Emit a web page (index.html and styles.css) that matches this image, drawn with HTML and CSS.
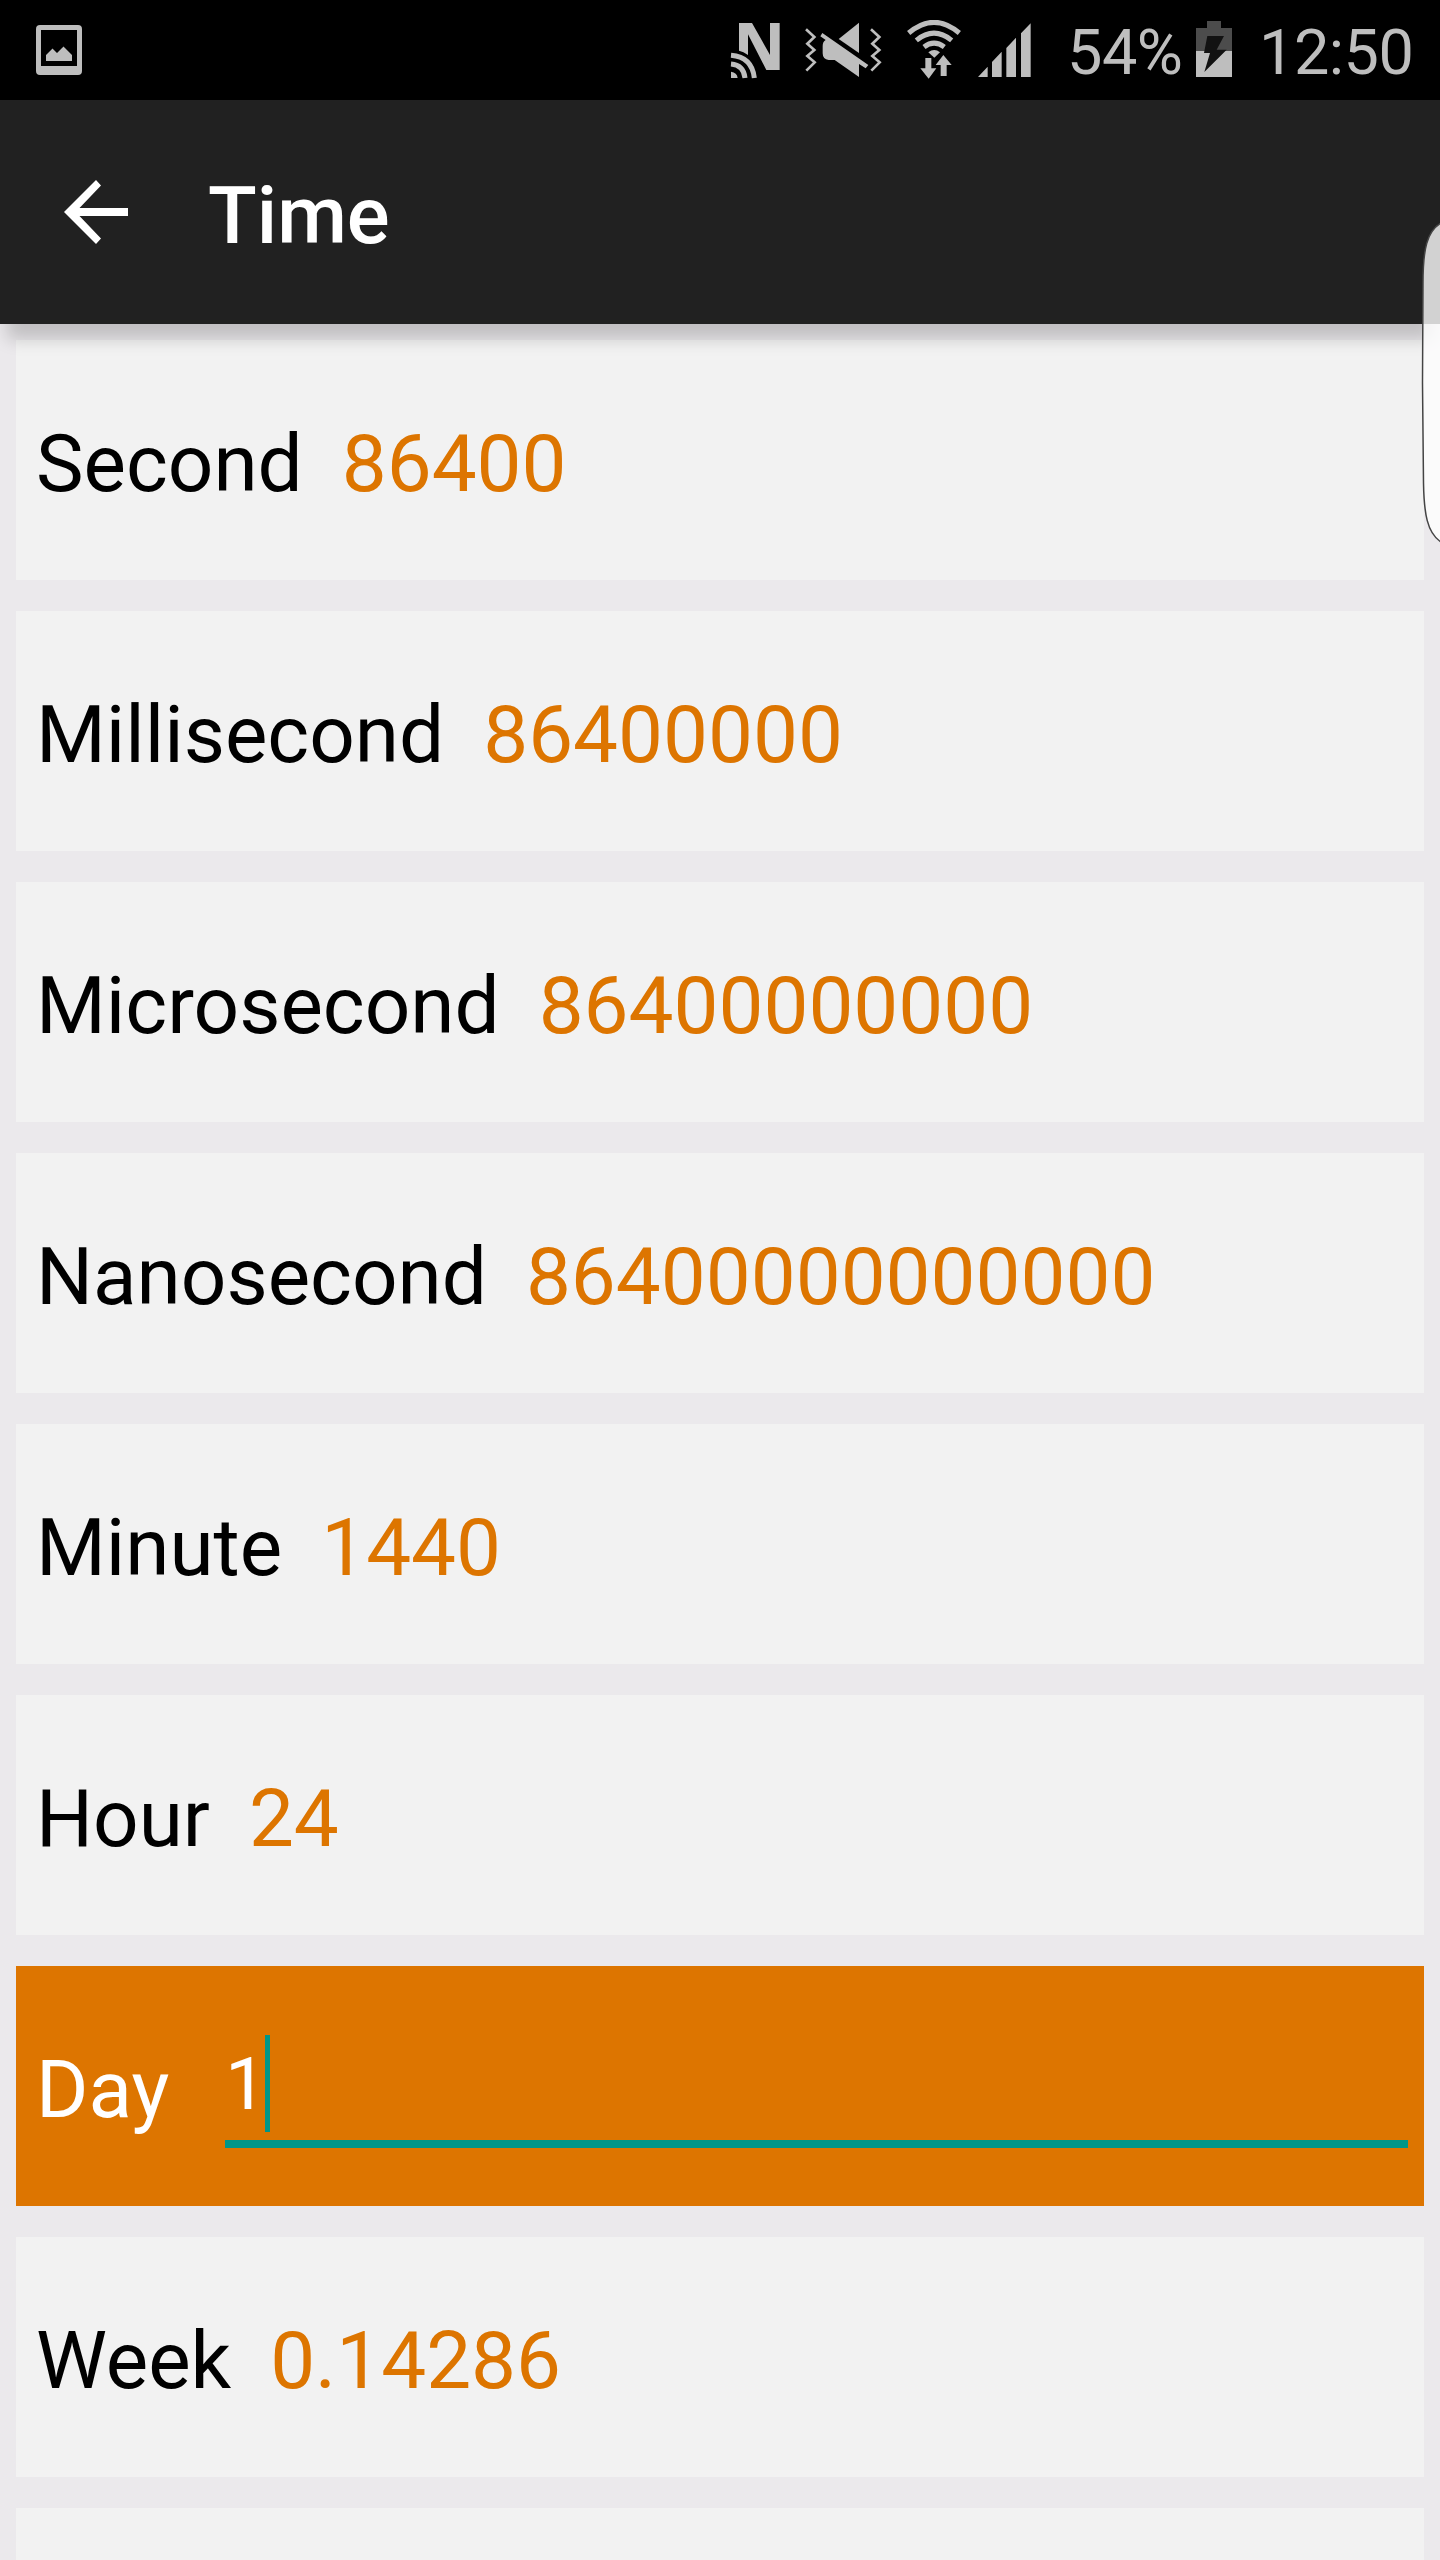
FILE: index.html
```
<!DOCTYPE html>
<html lang="en">
<head>
    <meta charset="UTF-8">
    <meta name="viewport" content="width=device-width, initial-scale=1.0">
    <title>Time</title>
    <link rel="stylesheet" href="styles.css">
</head>
<body>
    <div class="status-bar">
        <svg class="icon-image" viewBox="0 0 46 50">
            <path fill-rule="evenodd" d="M4 0h38a4 4 0 0 1 4 4v42a4 4 0 0 1-4 4H4a4 4 0 0 1-4-4V4a4 4 0 0 1 4-4zM5 5v36h36V5z"/>
            <path d="M10 36v-6l6.500-6.500 4.500 4.500 6.500-6.500 8.500 8.500v6z"/>
        </svg>
        <div class="status-icons">
            <!-- NFC -->
            <svg class="icon-nfc" viewBox="60 60 153 180">
                <path d="M87 69h39l54 96V69h29v141h-40l-55-107v62q-14-10-27-13z"/>
                <path d="M63 215q18 2 20 19H63z"/>
                <path class="line" d="M63 192q38 3 42 42M63 166q63 5 70 68"/>
            </svg>
            <!-- muted, vibrate -->
            <svg class="icon-mute" viewBox="285 60 231 180">
                <path class="zigzag" d="M288 88l25 23-21 20 21 19-21 18 22 19-25 25M483 88l25 23-21 20 21 19-21 18 22 19-25 25"/>
                <path d="M447 68v91l-61-42z"/>
                <path d="M337 99l138 96-8 10-20-13v39l-73-51h-18q-18-2-18-20v-22q0-13 9-18l-16-11z"/>
            </svg>
            <!-- wifi -->
            <svg class="icon-wifi" viewBox="588 60 168 180">
                <path class="arc" d="M596 99q76-64 152 0M619 121q53-43 106 0M642 141q30-23 61 0"/>
                <path d="M655 157q18-14 35 0l-17 16z"/>
                <path class="cut" d="M646 174h18v31h15l-23 31-25-31h15zM700 165l25 30h-15v33h-18v-33h-15z"/>
            </svg>
            <!-- signal -->
            <svg class="icon-signal" viewBox="804 60 159 180">
                <path d="M804 231l29-31v31zM846 231v-45l29-31v76zM889 231v-87l29-31v118zM933 231V100l29-30v161z"/>
            </svg>
        </div>
        <span class="battery-level">54%</span>
        <svg class="icon-battery" viewBox="468 60 108 180">
            <path class="empty" d="M501 63h42v21h33v69H468V84h33z"/>
            <path d="M468 153h108v78H468z"/>
            <path class="bolt" d="M502 108h50l-22 41h30l-67 67 17-57h-18z"/>
        </svg>
        <span class="clock">12:50</span>
    </div>

    <div class="header">
        <svg class="back" viewBox="0 0 64 64">
            <path d="M64 28v8H15.500l21.500 22.500L32 64 0 32 32 0l5 5.500L15.500 28z"/>
        </svg>
        <h1>Time</h1>
    </div>

    <div class="unit-list">
        <div class="unit"><span class="name">Second</span><span class="value">86400</span></div>
        <div class="unit"><span class="name">Millisecond</span><span class="value">86400000</span></div>
        <div class="unit"><span class="name">Microsecond</span><span class="value">86400000000</span></div>
        <div class="unit"><span class="name">Nanosecond</span><span class="value">86400000000000</span></div>
        <div class="unit"><span class="name">Minute</span><span class="value">1440</span></div>
        <div class="unit"><span class="name">Hour</span><span class="value">24</span></div>
        <div class="unit active">
            <span class="name">Day</span>
            <div class="field"><span>1</span><i class="cursor"></i></div>
        </div>
        <div class="unit"><span class="name">Week</span><span class="value">0.14286</span></div>
        <div class="unit last"></div>
    </div>

    <!-- edge panel handle -->
    <svg class="edge-handle" viewBox="0 0 20 324">
        <path d="M21 2C7 10 3 28 3 62L2.500 162 3.500 262C4 292 7 312 21 321z"/>
    </svg>
</body>
</html>
```
FILE: styles.css
```
* {
    box-sizing: border-box;
}
body {
    margin: 0;
    width: 1440px;
    height: 2560px;
    overflow: hidden;
    position: relative;
    font-family: Roboto, sans-serif;
    background-color: #ebe9ec;
    color: #000;
}
svg {
    display: block;
    flex: none;
}
.status-bar {
    display: flex;
    align-items: center;
    height: 100px;
    padding: 0 26px 0 36px;
    background-color: #000;
    color: #bebebe;
    fill: #bebebe;
    font-size: 63px;
}
.icon-image {
    width: 46px;
    height: 50px;
}
.status-icons {
    display: flex;
    margin-left: 648px;
}
.icon-nfc {
    width: 51px;
    height: 60px;
}
.icon-mute {
    width: 77px;
    height: 60px;
    margin-left: 24px;
}
.icon-wifi {
    width: 56px;
    height: 60px;
    margin-left: 24px;
}
.icon-signal {
    width: 53px;
    height: 60px;
    margin-left: 16px;
}
.line, .arc, .zigzag {
    fill: none;
    stroke: #bebebe;
    stroke-width: 15;
}
.zigzag {
    stroke-width: 8;
}
.cut {
    stroke: #000;
    stroke-width: 8;
    paint-order: stroke;
}
.battery-level {
    flex: none;
    width: 129px;
    margin-left: 36px;
    padding-top: 5px;
    letter-spacing: -0.5px;
}
.icon-battery {
    width: 36px;
    height: 60px;
}
.icon-battery .empty {
    fill: #4c4c4c;
}
.icon-battery .bolt {
    fill: #121212;
}
.clock {
    margin-left: 27px;
    padding-top: 5px;
    letter-spacing: -0.5px;
}
.header {
    display: flex;
    align-items: center;
    height: 224px;
    padding-left: 64px;
    background-color: #212121;
    color: #fff;
    position: relative;
    box-shadow: 0 22px 16px -7px rgba(0, 0, 0, 0.18);
}
.back {
    width: 64px;
    height: 64px;
    fill: #fff;
}
.header h1 {
    margin: 0 0 0 80px;
    padding-top: 7px;
    font-size: 80px;
    font-weight: 500;
}
.unit-list {
    display: flex;
    flex-direction: column;
    gap: 31px;
    padding: 16px 16px 0;
}
.unit {
    display: flex;
    align-items: center;
    flex: none;
    height: 240px;
    padding: 7px 16px 0 20px;
    background-color: #f2f2f2;
    font-size: 80px;
}
/* cut off by the bottom of the screen */
.unit.last {
    height: 52px;
}
.value {
    margin-left: 39px;
    color: #dd7500;
}
.unit.active {
    background-color: #dd7500;
    color: #fff;
}
.field {
    display: flex;
    align-items: center;
    flex: 1;
    height: 113px;
    margin: 3px 0 0 56px;
    padding-bottom: 8px;
    border-bottom: 8px solid #009688;
    font-size: 73px;
}
.field span {
    padding-top: 2px;
}
.cursor {
    width: 5px;
    height: 97px;
    margin-left: -1px;
    background-color: #009688;
}
.edge-handle {
    position: absolute;
    top: 221px;
    left: 1420px;
    width: 20px;
    height: 324px;
    fill: rgba(255, 255, 255, 0.8);
    stroke: #444;
    stroke-width: 1.5;
}
```
